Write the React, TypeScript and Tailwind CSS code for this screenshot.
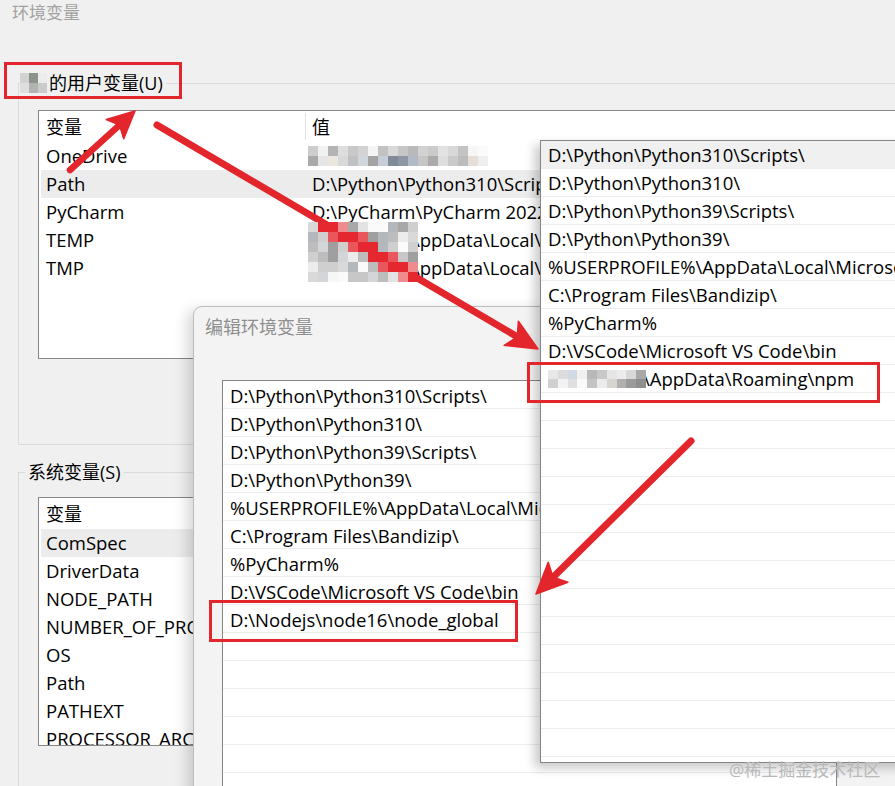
import React from "react";

const RED = "#e3252c";
type Pt = [number, number];

function arrowGeom(tail: Pt, tip: Pt, headLen: number, halfW: number, notch: number) {
  const dx = tip[0] - tail[0];
  const dy = tip[1] - tail[1];
  const L = Math.hypot(dx, dy);
  const ux = dx / L;
  const uy = dy / L;
  const nx = -uy;
  const ny = ux;
  const bx = tip[0] - headLen * ux;
  const by = tip[1] - headLen * uy;
  const kx = tip[0] - (headLen - notch) * ux;
  const ky = tip[1] - (headLen - notch) * uy;
  const head = `${tip[0]},${tip[1]} ${bx + halfW * nx},${by + halfW * ny} ${kx},${ky} ${bx - halfW * nx},${by - halfW * ny}`;
  return { head, end: [kx, ky] as Pt };
}

function Arrow({ tail, tip, headLen = 30, halfW = 14, notch = 7, w = 7 }: { tail: Pt; tip: Pt; headLen?: number; halfW?: number; notch?: number; w?: number }) {
  const g = arrowGeom(tail, tip, headLen, halfW, notch);
  return (
    <g>
      <line x1={tail[0]} y1={tail[1]} x2={g.end[0]} y2={g.end[1]} stroke={RED} strokeWidth={w} strokeLinecap="round" />
      <polygon points={g.head} fill={RED} stroke={RED} strokeWidth={1.5} strokeLinejoin="round" />
    </g>
  );
}

function seeded(seed: number) {
  let s = seed;
  return () => {
    s = (s * 16807) % 2147483647;
    return (s - 1) / 2147483646;
  };
}

const GRAYS = ["#d9d9d9", "#bdbdbd", "#a8a8a8", "#ececec", "#cfcfcf", "#9f9f9f", "#e3e3e3", "#b4b7bc", "#f6f6f6", "#c7c7c7", "#fafafa", "#d3d5d8"];

function TempMosaic() {
  const rnd = seeded(97);
  const A: Pt = [157, 125];
  const B: Pt = [538, 349];
  const L = Math.hypot(B[0] - A[0], B[1] - A[1]);
  const ux = (B[0] - A[0]) / L;
  const uy = (B[1] - A[1]) / L;
  const cells: React.ReactNode[] = [];
  for (let r = 0; r < 6; r++) {
    for (let c = 0; c < 11; c++) {
      const x = 308 + c * 10;
      const y = 222 + r * 10;
      const px = x + 5 - A[0];
      const py = y + 5 - A[1];
      const d = Math.abs(px * uy - py * ux);
      let col = GRAYS[Math.floor(rnd() * GRAYS.length)];
      if (d < 5) col = "#e5282f";
      else if (d < 8.5) col = rnd() > 0.5 ? "#ee8b8f" : "#e9575c";
      cells.push(<rect key={`${r}-${c}`} x={x} y={y} width={10} height={10} fill={col} />);
    }
  }
  return <g>{cells}</g>;
}

const USER_MOSAIC = ["#d2d2d2", "#8b938a", "#ececec", "#dedede", "#b2b4b1", "#cbcbcb"];
const ONEDRIVE_MOSAIC = [
  "#cdcdcd", "#f2f2f2", "#b4b4b4", "#dedede", "#c9c9c9", "#d3d3d3", "#f4f4f4", "#c2c2c2", "#d9d9d9", "#c6c6c6", "#b9b9b9", "#d2d2d2", "#cacaca", "#e2e2e2", "#d8d8d8", "#c3c3c3", "#f6f6f6", "#fafafa",
  "#a9a9a9", "#e6e6e6", "#ebe6de", "#d9d9d9", "#c1c1c1", "#d0d6de", "#a3a3a3", "#c6cdd6", "#808b9a", "#8e97a4", "#b2bac6", "#c6c6c6", "#aaaaaa", "#dddddd", "#cacaca", "#bcbcbc", "#e6ded6", "#efefef",
];
const NPM_MOSAIC = [
  "#e8e8e8", "#dcdcdc", "#d2d9e6", "#f0f0f0", "#b8b8b8", "#c8c8c8", "#e6e6e6", "#ececec", "#d8d8d8", "#a8a8a8",
  "#d0d0d0", "#f2f2f2", "#e0e0e0", "#fafafa", "#c4c4c4", "#ececec", "#d8d4d0", "#b0b0b0", "#9a9a9a", "#8e8e8e",
];

const PATHS = [
  "D:\\Python\\Python310\\Scripts\\",
  "D:\\Python\\Python310\\",
  "D:\\Python\\Python39\\Scripts\\",
  "D:\\Python\\Python39\\",
  "%USERPROFILE%\\AppData\\Local\\Microsoft\\WindowsApps",
  "C:\\Program Files\\Bandizip\\",
  "%PyCharm%",
  "D:\\VSCode\\Microsoft VS Code\\bin",
];

function NpmValue() {
  return (
    <span className="flex items-center">
      <span className="relative z-[1] flex flex-wrap w-[98px] -mt-[2px]">
        {NPM_MOSAIC.map((c, i) => (
          <span key={i} className="w-[9.8px] h-[9px]" style={{ backgroundColor: c }} />
        ))}
      </span>
      <span className="-ml-[3px]">{"\\AppData\\Roaming\\npm"}</span>
    </span>
  );
}

function MainRow({ name, value, sel }: { name: string; value?: React.ReactNode; sel?: boolean }) {
  return (
    <div className={`mx-[2px] h-[28px] flex items-center whitespace-nowrap ${sel ? "bg-[#ececec]" : ""}`}>
      <div className="w-[264px] pl-[5px] shrink-0">{name}</div>
      <div className="pl-[7px] flex items-center">{value}</div>
    </div>
  );
}

function ListHeader() {
  return (
    <div className="h-[31px] flex items-stretch text-[18px]">
      <div className="w-[266px] pl-[7px] flex items-center shrink-0">变量</div>
      <div className="w-px my-[2px] bg-[#e3e3e3]" />
      <div className="pl-[6px] flex items-center">值</div>
    </div>
  );
}

export default function App() {
  const userRows = [
    {
      name: "OneDrive",
      value: (
        <span className="-ml-[4px] flex flex-wrap w-[180px]">
          {ONEDRIVE_MOSAIC.map((c, i) => (
            <span key={i} className="w-[10px] h-[10px]" style={{ backgroundColor: c }} />
          ))}
        </span>
      ),
    },
    { name: "Path", value: "D:\\Python\\Python310\\Scripts\\;D:\\Python\\Python310\\;", sel: true },
    { name: "PyCharm", value: "D:\\PyCharm\\PyCharm 2022.2.3\\bin;" },
    { name: "TEMP", value: <span className="pl-[96px]">{"AppData\\Local\\Temp"}</span> },
    { name: "TMP", value: <span className="pl-[96px]">{"AppData\\Local\\Temp"}</span> },
  ];
  const sysRows = ["ComSpec", "DriverData", "NODE_PATH", "NUMBER_OF_PROCESSORS", "OS", "Path", "PATHEXT", "PROCESSOR_ARCHITECTURE"];
  const editRows = [...PATHS, "D:\\Nodejs\\node16\\node_global"];

  return (
    <div className="relative w-[895px] h-[786px] overflow-hidden bg-[#f0f0f0] text-black font-['Open_Sans','Noto_Sans_CJK_SC',sans-serif] text-[18.5px]">
      {/* main window */}
      <div className="h-[26px] pl-[12px] text-[17px] leading-[26px] text-[#a2a2a2]">环境变量</div>

      <fieldset className="ml-[18px] mt-[45px] w-[900px] border-l border-t border-b border-[#dadada] p-0">
        <legend className="ml-[1px] pr-[3px] h-[24px] flex items-center text-[18px] leading-[24px]">
          <span className="flex flex-wrap w-[27px]">
            {USER_MOSAIC.map((c, i) => (
              <span key={i} className="w-[9px] h-[10px]" style={{ backgroundColor: c }} />
            ))}
          </span>
          <span className="pl-[2px]">的用户变量(U)</span>
        </legend>
        <div className="pl-[19px] pt-[15px] pb-[85px]">
          <div className="w-[880px] h-[249px] border border-[#868686] bg-white leading-none">
            <ListHeader />
            {userRows.map((r) => (
              <MainRow key={r.name} name={r.name} value={r.value} sel={r.sel} />
            ))}
          </div>
        </div>
      </fieldset>

      <fieldset className="ml-[18px] mt-[15px] w-[900px] border-l border-t border-[#dadada] p-0">
        <legend className="ml-[6px] px-[3px] h-[24px] flex items-center text-[18px] leading-[24px]">系统变量(S)</legend>
        <div className="pl-[19px] pt-[13px] pb-[60px]">
          <div className="w-[880px] h-[249px] border border-[#868686] bg-white leading-none overflow-hidden">
            <ListHeader />
            {sysRows.map((n, i) => (
              <MainRow key={n} name={n} sel={i === 0} />
            ))}
          </div>
        </div>
      </fieldset>

      {/* edit dialog */}
      <div className="absolute left-[193px] top-[306px] w-[740px] h-[520px] rounded-tl-[9px] border border-[#bcbcbc] bg-[#f3f3f3] shadow-[-6px_4px_14px_rgba(0,0,0,0.16)]">
        <div className="pl-[11px] pt-[8px] h-[32px] text-[18px] leading-[24px] text-[#8f8f8f]">编辑环境变量</div>
        <div className="ml-[28px] mt-[41px] w-[615px] h-[420px] border border-[#858585] bg-white leading-none">
          {Array.from({ length: 16 }).map((_, i) => (
            <div key={i} className="h-[28px] border-b border-[#ededed] pl-[7px] pt-[3px] flex items-center whitespace-nowrap">
              {editRows[i] ?? ""}
            </div>
          ))}
        </div>
      </div>

      {/* front path list */}
      <div className="absolute left-[540px] top-[140px] w-[380px] h-[623px] border border-[#858585] bg-white overflow-hidden leading-none shadow-[-5px_5px_10px_rgba(0,0,0,0.22)]">
        {Array.from({ length: 23 }).map((_, i) => (
          <div
            key={i}
            className={`h-[28px] border-b border-[#ededed] pl-[7px] pt-[2px] flex items-center whitespace-nowrap ${i === 0 ? "bg-[#f0f0f0]" : ""}`}
          >
            {i < 8 ? PATHS[i] : i === 8 ? <NpmValue /> : ""}
          </div>
        ))}
      </div>

      {/* watermark */}
      <div className="absolute left-[729px] top-[759px] text-[17px] leading-[22px] text-[#b8b8b8] whitespace-nowrap">@稀土掘金技术社区</div>

      {/* annotations */}
      <svg className="absolute left-0 top-0 pointer-events-none" width={895} height={786} viewBox="0 0 895 786">
        <Arrow tail={[70, 170]} tip={[135, 111]} headLen={27} halfW={13} notch={6} w={6.5} />
        <Arrow tail={[157, 125]} tip={[538, 349]} headLen={31} halfW={14} notch={7} w={7} />
        <TempMosaic />
        <Arrow tail={[691, 441]} tip={[536, 594]} headLen={31} halfW={14} notch={7} w={7} />
        <rect x={5.5} y={63.5} width={175} height={34} fill="none" stroke={RED} strokeWidth={3} />
        <rect x={528.5} y={363.5} width={350} height={38} fill="none" stroke={RED} strokeWidth={3} />
        <rect x={210.5} y={601.5} width={306} height={39} fill="none" stroke={RED} strokeWidth={3} />
      </svg>
    </div>
  );
}
